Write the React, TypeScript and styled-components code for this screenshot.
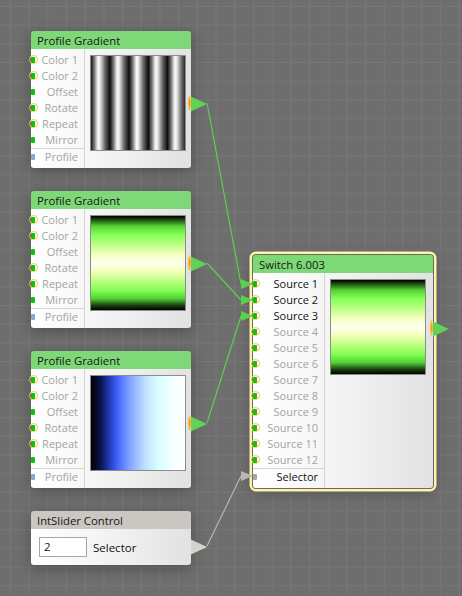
import React from 'react';
import styled, { createGlobalStyle } from 'styled-components';

const Global = createGlobalStyle`
  html, body { margin: 0; padding: 0; background: #6f6f6f; }
  body { font-family: "Open Sans", "Noto Sans", sans-serif; }
  * { box-sizing: border-box; }
`;

const Canvas = styled.div`
  position: relative;
  width: 462px;
  height: 596px;
  overflow: hidden;
  background-color: #6e6e6e;
  background-image:
    linear-gradient(#777777 1px, transparent 1px),
    linear-gradient(90deg, #777777 1px, transparent 1px);
  background-size: 18.7px 18.7px;
  background-position: 10px 6px;
`;

const NodeBox = styled.div<{ $x: number; $y: number; $w: number; $selected?: boolean }>`
  position: absolute;
  left: ${p => p.$x}px;
  top: ${p => p.$y}px;
  width: ${p => p.$w}px;
  display: flex;
  flex-direction: column;
  border-radius: 3px;
  box-shadow: ${p =>
    p.$selected
      ? '0 0 0 1px #6a6a6a, 0 0 0 3.5px #fdf4a6, 0 3px 14px rgba(0,0,0,0.35)'
      : '0 3px 14px rgba(0,0,0,0.3)'};
`;

const Header = styled.div<{ $tone: 'green' | 'gray' }>`
  height: 18px;
  padding: 0 6px;
  display: flex;
  align-items: center;
  background: ${p => (p.$tone === 'green' ? '#7fd878' : '#cac6c2')};
  color: #161616;
  font-size: 11.3px;
  border-radius: 3px 3px 0 0;
  white-space: nowrap;
`;

const Body = styled.div`
  display: flex;
  align-items: flex-start;
  background: linear-gradient(90deg, #ffffff 0%, #f4f4f4 45%, #e2e2e2 100%);
  border-radius: 0 0 3px 3px;
`;

const PortColumn = styled.div<{ $w: number }>`
  width: ${p => p.$w}px;
  flex: none;
  align-self: stretch;
  border-right: 1px solid #d4d4d4;
  padding: 3px 0 4px;
  display: flex;
  flex-direction: column;
`;

const PortRow = styled.div<{ $active?: boolean; $divided?: boolean }>`
  position: relative;
  height: 16px;
  line-height: 15px;
  text-align: right;
  padding-right: 6px;
  font-size: 11px;
  white-space: nowrap;
  color: ${p => (p.$active ? '#121212' : '#a4a4a4')};
  border-top: ${p => (p.$divided ? '1px solid #d4d4d4' : '0')};
`;

const Ring = styled.span`
  position: absolute;
  left: -2px;
  top: 3px;
  width: 9px;
  height: 9px;
  border-radius: 50%;
  border: 1.5px solid #f3c24a;
`;

const Dot = styled.span<{ $kind: 'green' | 'profile' | 'gray' }>`
  position: absolute;
  left: 0;
  top: 5px;
  width: 4px;
  height: 6px;
  border-radius: 1px;
  background: ${p =>
    p.$kind === 'green' ? '#0cc20c' : p.$kind === 'profile' ? '#8aa6dc' : '#a8a8a8'};
`;

type PreviewKind = 'stripes' | 'green' | 'blue';

const previewBg: Record<PreviewKind, string> = {
  stripes:
    'repeating-linear-gradient(90deg, #161616 0px, #6e6e6e 3px, #fafafa 7px, #e8e8e8 9px, #666666 14px, #080808 19.2px)',
  green:
    'linear-gradient(180deg, #000000 0%, #1e4a12 4%, #56d336 11%, #86ff56 20%, #c6ff8c 32%, #f6ffc6 42%, #ffffee 50%, #f6ffc0 58%, #c2ff86 68%, #82ff52 79%, #52cf34 88%, #1a4210 95%, #000000 100%)',
  blue:
    'linear-gradient(90deg, #000000 0%, #0b1650 11%, #2a46d2 22%, #4a6cff 30%, #86a6ff 42%, #bfe2ff 58%, #dcffff 72%, #f4ffff 88%, #ffffff 100%)',
};

const Preview = styled.div<{ $kind: PreviewKind; $ml: number }>`
  width: 96px;
  height: 96px;
  flex: none;
  margin: 6px 0 0 ${p => p.$ml}px;
  border: 1px solid #8c8c8c;
  background: ${p => previewBg[p.$kind]};
`;

const OutPort = styled.div<{ $top: number }>`
  position: absolute;
  right: -16px;
  top: ${p => p.$top - 8}px;
  width: 16px;
  height: 16px;
`;

const Sliver = styled.span`
  position: absolute;
  left: -3px;
  top: 0px;
  width: 3px;
  height: 16px;
  border-radius: 50%;
  background: radial-gradient(ellipse at center, #f39a16 0%, #f7b640 55%, rgba(250, 200, 90, 0) 100%);
`;

const SliderBody = styled.div`
  height: 36px;
  display: flex;
  align-items: center;
  gap: 6px;
  padding: 0 8px;
  background: linear-gradient(90deg, #ffffff 0%, #f4f4f4 45%, #e2e2e2 100%);
  border-radius: 0 0 3px 3px;
  font-size: 11.5px;
  color: #111;
`;

const ValueBox = styled.div`
  width: 48px;
  height: 20px;
  border: 1px solid #a6a6a6;
  background: #fff;
  padding-left: 4px;
  line-height: 18px;
  font-size: 11.5px;
  color: #111;
`;

const Wires = styled.svg`
  position: absolute;
  left: 0;
  top: 0;
  pointer-events: none;
`;

type Port = { label: string; marker: 'ring' | 'plain' | 'profile' | 'gray'; active?: boolean; divided?: boolean };

const PortList: React.FC<{ ports: Port[]; width: number }> = ({ ports, width }) => (
  <PortColumn $w={width}>
    {ports.map(p => (
      <PortRow key={p.label} $active={p.active} $divided={p.divided}>
        {p.marker === 'ring' && <Ring />}
        <Dot $kind={p.marker === 'profile' ? 'profile' : p.marker === 'gray' ? 'gray' : 'green'} />
        {p.label}
      </PortRow>
    ))}
  </PortColumn>
);

const Output: React.FC<{ top: number; color: string; live?: boolean }> = ({ top, color, live = true }) => (
  <OutPort $top={top}>
    {live && <Sliver />}
    <svg width="16" height="16" viewBox="0 0 16 16">
      <polygon points="0,0.5 16,8 0,15.5" fill={color} />
    </svg>
  </OutPort>
);

const gradientPorts: Port[] = [
  { label: 'Color 1', marker: 'ring' },
  { label: 'Color 2', marker: 'ring' },
  { label: 'Offset', marker: 'plain' },
  { label: 'Rotate', marker: 'ring' },
  { label: 'Repeat', marker: 'ring' },
  { label: 'Mirror', marker: 'plain' },
  { label: 'Profile', marker: 'profile', divided: true },
];

const switchPorts: Port[] = [
  ...Array.from({ length: 12 }, (_, i) => ({
    label: `Source ${i + 1}`,
    marker: 'ring' as const,
    active: i < 3,
  })),
  { label: 'Selector', marker: 'gray', active: true, divided: true },
];

const GradientNode: React.FC<{ y: number; kind: PreviewKind }> = ({ y, kind }) => (
  <NodeBox $x={31} $y={y} $w={160}>
    <Header $tone="green">Profile Gradient</Header>
    <Body>
      <PortList ports={gradientPorts} width={54} />
      <Preview $kind={kind} $ml={5} />
    </Body>
    <Output top={72} color="#62d256" />
  </NodeBox>
);

const GREEN = '#5ccf4e';
const GRAY = '#b9b6b3';

const Arrow: React.FC<{ y: number; color: string }> = ({ y, color }) => (
  <polygon points={`241,${y - 5} 253,${y} 241,${y + 5}`} fill={color} />
);

export default function App() {
  return (
    <>
      <Global />
      <Canvas>
        <GradientNode y={31} kind="stripes" />
        <GradientNode y={191} kind="green" />
        <GradientNode y={351} kind="blue" />

        <NodeBox $x={253} $y={255} $w={180} $selected>
          <Header $tone="green">Switch 6.003</Header>
          <Body>
            <PortList ports={switchPorts} width={72} />
            <Preview $kind="green" $ml={5} />
          </Body>
          <Output top={73} color="#62d256" />
        </NodeBox>

        <NodeBox $x={31} $y={511} $w={160}>
          <Header $tone="gray">IntSlider Control</Header>
          <SliderBody>
            <ValueBox>2</ValueBox>
            <span>Selector</span>
          </SliderBody>
          <Output top={35} color="#d6d2ce" live={false} />
        </NodeBox>

        <Wires width={462} height={596} viewBox="0 0 462 596">
          <g fill="none" strokeWidth={1.2}>
            <path d="M207,103 L241,284" stroke={GREEN} />
            <path d="M207,263 L241,300" stroke={GREEN} />
            <path d="M207,423 L241,316" stroke={GREEN} />
            <path d="M207,546 L241,476" stroke={GRAY} />
          </g>
          <Arrow y={284} color={GREEN} />
          <Arrow y={300} color={GREEN} />
          <Arrow y={316} color={GREEN} />
          <Arrow y={476} color={GRAY} />
        </Wires>
      </Canvas>
    </>
  );
}
